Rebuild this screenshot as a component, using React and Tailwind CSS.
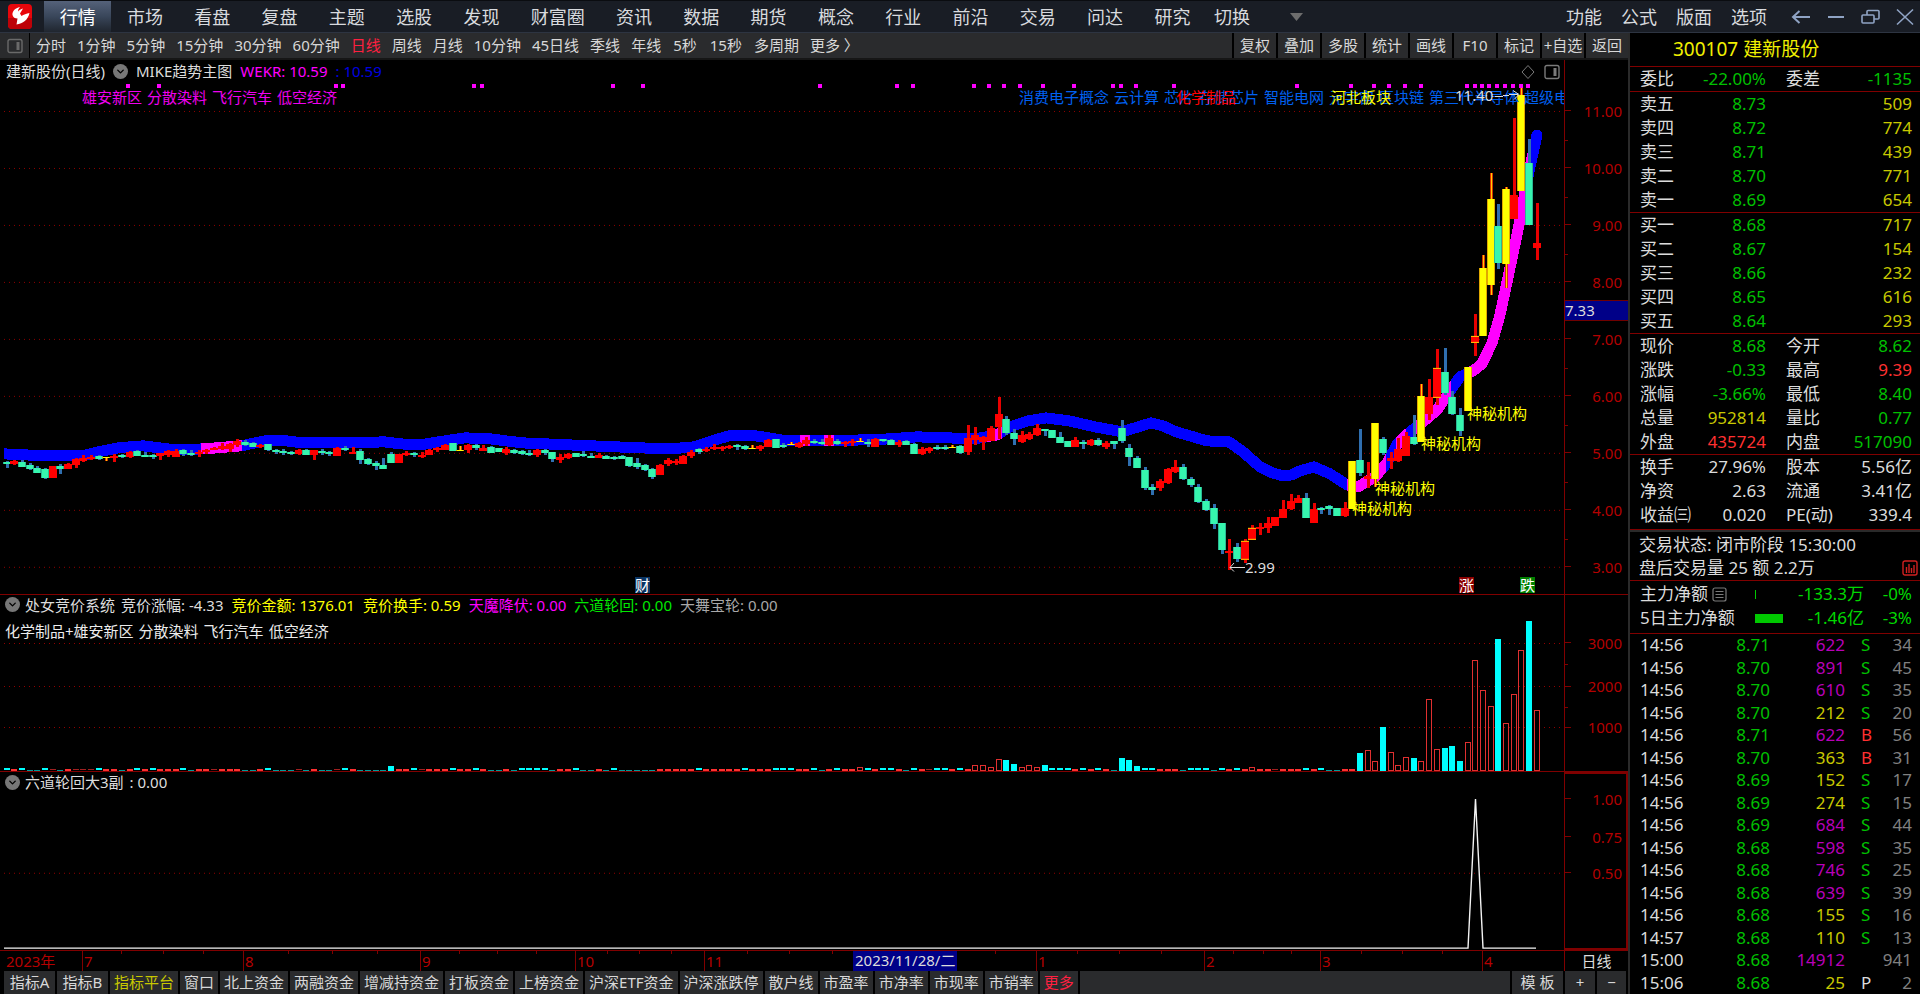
import clsx from 'clsx'
import { ChevronDown } from 'lucide-react'

const MENU = ['行情', '市场', '看盘', '复盘', '主题', '选股', '发现', '财富圈', '资讯', '数据', '期货', '概念', '行业', '前沿', '交易', '问达', '研究']
const PERIODS = ['分时', '1分钟', '5分钟', '15分钟', '30分钟', '60分钟', '日线', '周线', '月线', '10分钟', '45日线', '季线', '年线', '5秒', '15秒', '多周期', '更多 〉']
const TOOLS = ['复权', '叠加', '多股', '统计', '画线', 'F10', '标记', '+自选', '返回']
const TABS = ['指标A', '指标B', '指标平台', '窗口', '北上资金', '两融资金', '增减持资金', '打板资金', '上榜资金', '沪深ETF资金', '沪深涨跌停', '散户线', '市盈率', '市净率', '市现率', '市销率', '更多']

const HOT = ['雄安新区', '分散染料', '飞行汽车', '低空经济']
const CONCEPTS = ['消费电子概念', '云计算', '芯片', '存储芯片', '智能电网', '元宇宙', '区块链', '第三代半导体', '超级电容']

// plot width and panel heights in chart units
const W = 1564
const MAIN_H = 534
const VOL_H = 176
const SUB_H = 178
const HEAD = 12 // header space above the price scale

const xOf = (i) => Math.round(6.5 + 7.69 * i)

// [kind, high, bodyTop, bodyBottom, low]
// g = down, r = up, y = limit-up, c = up with yellow caps
const CANDLES = [
  ['g', 389, 390, 392, 396], ['r', 388, 389, 392, 393], ['g', 388, 390, 395, 395], ['g', 391, 393, 397, 398], ['g', 394, 396, 401, 401],
  ['g', 396, 397, 406, 407], ['r', 394, 394, 406, 406], ['g', 392, 394, 397, 402], ['r', 391, 392, 397, 397], ['r', 386, 387, 393, 396],
  ['r', 383, 386, 389, 390], ['r', 383, 385, 387, 388], ['g', 383, 384, 387, 388], ['y', 385, 385, 386, 389], ['r', 382, 384, 386, 390],
  ['g', 382, 383, 384, 386], ['r', 379, 380, 385, 386], ['g', 378, 379, 384, 384], ['g', 380, 383, 384, 385], ['g', 382, 383, 385, 387],
  ['r', 381, 381, 384, 388], ['r', 378, 379, 383, 385], ['r', 377, 379, 385, 385], ['g', 377, 378, 382, 384], ['g', 378, 381, 382, 384],
  ['r', 378, 380, 382, 385], ['r', 377, 378, 380, 382], ['r', 375, 376, 378, 378], ['r', 371, 374, 377, 378], ['r', 371, 372, 377, 380],
  ['r', 367, 369, 373, 375], ['g', 368, 370, 373, 374], ['g', 370, 371, 375, 375], ['r', 372, 373, 375, 376], ['g', 372, 372, 378, 379],
  ['g', 377, 378, 380, 382], ['g', 377, 379, 380, 383], ['g', 379, 380, 382, 383], ['r', 377, 378, 382, 383], ['g', 377, 378, 383, 383],
  ['r', 378, 378, 383, 388], ['g', 377, 379, 381, 383], ['g', 379, 380, 382, 384], ['r', 375, 376, 384, 384], ['g', 374, 376, 378, 379],
  ['r', 375, 380, 382, 382], ['g', 377, 379, 388, 392], ['g', 386, 387, 392, 393], ['g', 389, 391, 394, 398], ['g', 386, 393, 397, 397],
  ['g', 380, 382, 391, 391], ['r', 382, 382, 391, 391], ['r', 379, 381, 382, 384], ['g', 380, 381, 383, 385], ['r', 380, 383, 385, 386],
  ['r', 377, 378, 383, 383], ['r', 375, 376, 378, 380], ['r', 372, 373, 378, 378], ['g', 371, 371, 379, 379], ['y', 374, 378, 378, 378],
  ['r', 372, 373, 378, 381], ['g', 372, 373, 376, 378], ['r', 373, 376, 379, 379], ['g', 374, 375, 381, 381], ['g', 376, 376, 380, 380],
  ['r', 375, 377, 381, 383], ['g', 377, 378, 381, 382], ['g', 378, 379, 382, 383], ['g', 378, 381, 383, 384], ['r', 377, 378, 383, 385],
  ['g', 377, 378, 381, 383], ['g', 380, 380, 387, 390], ['r', 382, 385, 388, 391], ['r', 381, 382, 386, 387], ['g', 381, 381, 385, 385],
  ['g', 379, 382, 384, 385], ['g', 381, 384, 386, 386], ['r', 381, 383, 386, 386], ['g', 383, 384, 387, 387], ['g', 384, 385, 387, 388],
  ['g', 383, 384, 387, 387], ['g', 385, 385, 394, 395], ['g', 386, 391, 395, 397], ['g', 392, 393, 398, 399], ['g', 396, 397, 405, 407],
  ['r', 392, 393, 403, 403], ['r', 386, 388, 392, 394], ['r', 387, 389, 390, 393], ['r', 383, 384, 392, 392], ['r', 378, 380, 384, 386],
  ['g', 376, 377, 380, 382], ['r', 375, 377, 379, 380], ['r', 372, 375, 377, 378], ['r', 374, 375, 377, 379], ['r', 373, 374, 376, 377],
  ['g', 372, 373, 375, 378], ['g', 373, 374, 377, 378], ['y', 373, 376, 376, 376], ['r', 373, 374, 377, 379], ['r', 367, 368, 375, 375],
  ['g', 367, 367, 376, 376], ['g', 371, 373, 375, 376], ['y', 370, 372, 372, 373], ['r', 370, 371, 375, 376], ['r', 365, 368, 372, 374],
  ['g', 367, 369, 371, 372], ['g', 367, 370, 372, 373], ['r', 363, 366, 373, 374], ['g', 367, 369, 372, 373], ['r', 369, 370, 372, 375],
  ['r', 367, 369, 371, 374], ['y', 366, 369, 369, 369], ['g', 367, 370, 372, 375], ['r', 366, 367, 375, 375], ['g', 367, 367, 369, 370],
  ['g', 367, 368, 373, 373], ['r', 368, 370, 373, 375], ['g', 368, 369, 373, 373], ['g', 371, 372, 382, 382], ['r', 375, 377, 382, 383],
  ['r', 375, 376, 379, 381], ['g', 373, 375, 377, 378], ['g', 373, 375, 376, 378], ['y', 373, 375, 375, 376], ['g', 373, 374, 381, 382],
  ['r', 353, 366, 380, 383], ['r', 355, 363, 368, 373], ['r', 364, 365, 370, 378], ['r', 354, 356, 369, 369], ['r', 325, 342, 355, 367],
  ['g', 344, 347, 361, 363], ['g', 357, 361, 367, 373], ['r', 359, 363, 370, 371], ['r', 360, 362, 367, 368], ['r', 352, 356, 363, 364],
  ['g', 357, 357, 359, 364], ['g', 358, 358, 366, 366], ['g', 360, 365, 371, 371], ['g', 369, 369, 375, 375], ['r', 365, 368, 375, 375],
  ['g', 368, 370, 372, 377], ['r', 367, 368, 373, 374], ['g', 366, 368, 373, 374], ['r', 369, 371, 375, 377], ['g', 369, 369, 372, 377],
  ['g', 348, 356, 369, 371], ['g', 372, 376, 385, 394], ['g', 384, 386, 396, 396], ['g', 395, 398, 416, 418], ['g', 412, 415, 418, 423],
  ['r', 407, 409, 416, 419], ['r', 396, 397, 411, 412], ['r', 388, 395, 400, 401], ['g', 392, 395, 407, 408], ['g', 405, 407, 413, 415],
  ['g', 412, 415, 430, 431], ['g', 427, 429, 438, 439], ['g', 432, 436, 452, 457], ['g', 451, 451, 478, 482], ['r', 467, 479, 480, 498],
  ['g', 471, 475, 487, 490], ['c', 467, 469, 488, 491], ['c', 453, 456, 468, 468], ['r', 451, 455, 457, 463], ['r', 445, 451, 456, 461],
  ['r', 445, 445, 454, 454], ['r', 428, 437, 446, 446], ['r', 422, 429, 437, 438], ['r', 423, 426, 431, 431], ['g', 421, 426, 446, 446],
  ['r', 431, 437, 451, 451], ['g', 435, 436, 437, 442], ['g', 433, 434, 437, 443], ['g', 436, 436, 444, 444], ['r', 430, 436, 444, 445],
  ['y', 389, 389, 437, 437], ['g', 357, 388, 401, 404], ['r', 390, 404, 407, 416], ['y', 351, 351, 407, 415], ['g', 365, 367, 381, 383],
  ['r', 380, 386, 389, 397], ['r', 366, 377, 389, 390], ['r', 360, 364, 384, 384], ['g', 343, 365, 372, 373], ['y', 312, 324, 370, 370],
  ['r', 307, 325, 342, 348], ['c', 277, 296, 326, 333], ['g', 276, 300, 321, 323], ['g', 319, 325, 342, 343], ['g', 336, 343, 359, 364],
  ['y', 295, 295, 339, 339], ['c', 242, 264, 271, 284], ['y', 183, 196, 264, 264], ['y', 101, 127, 213, 223], ['g', 132, 154, 191, 197],
  ['y', 115, 117, 192, 216], ['r', 46, 123, 147, 147], ['y', 16, 23, 119, 119], ['g', 67, 91, 153, 153], ['r', 131, 171, 176, 188],
]

const BAND = '4,382 45,384 82,384 94,381 118,376 143,374 167,377 180,378 204,377 241,374 265,369 286,369 302,371 351,371 384,370 400,372 420,373 445,369 465,366 490,367 522,371 592,374 640,376 671,377 694,375 712,369 729,364 756,364 787,369 828,369 863,368 890,367 917,365 948,366 975,367 997,363 1010,355 1028,349 1046,346 1069,349 1095,355 1122,360 1135,356 1151,351 1163,354 1176,360 1207,369 1229,370 1243,380 1260,395 1272,401 1283,404 1292,403 1300,399 1314,395 1330,402 1347,413 1358,415 1375,405 1387,391 1398,371 1410,360 1423,350 1437,338 1450,319 1460,305 1473,299 1482,292 1492,271 1500,243 1510,196 1518,158 1525,120 1530,95 1537,63'
const PINK = [[201, 242], [800, 810], [824, 834], [974, 977], [987, 1002], [1347, 1386], [1396, 1406], [1416, 1451], [1466, 1531]]

const DOTS = [128, 159, 336, 343, 474, 482, 613, 643, 820, 897, 913, 974, 989, 1004, 1020, 1043, 1074, 1113, 1121, 1136, 1174, 1297, 1351, 1374, 1389, 1405, 1421, 1467, 1475, 1482, 1489, 1497, 1505, 1513, 1521, 1528]

// quiet days, one letter each: c/d = down, r/m = up (d and m are the faint ones)
const QUIET = [
  'crcddcmdrm', 'mmcrrdrcrc', 'rrrcdrrmrr', 'rddrcdddmd', 'rddmcrdddd', 'crrcmrrrcr',
  'rcrddrdccc', 'cdrrcddrdc', 'dddddrrrrr', 'crrrrrcrrr', 'cccrrcdrcr', 'rrcrccrdcr',
  'mccrcrrrrr', 'ccrrrccccr', 'crcrdccccc', 'rrrdcccdcr', 'crrrrmrrrc', 'rcddrr',
].join('')
const QUIET_H = { c: 3, r: 2, d: 1, m: 2 }
const QUIET_FILL = { c: '#00ffff', r: '#ff3030', d: '#009c9c', m: '#a02020' }

// [candle index, 'c' | 'r', height]
const BARS = [
  [50, 'c', 5], [111, 'r', 4], [126, 'r', 6], [127, 'r', 6], [128, 'r', 4], [129, 'r', 12], [130, 'c', 11], [131, 'c', 7], [132, 'r', 4], [133, 'r', 6], [134, 'r', 4], [135, 'c', 6],
  [145, 'c', 13], [146, 'c', 11], [147, 'c', 5], [162, 'r', 4],
  [176, 'c', 18], [177, 'r', 21], [178, 'r', 10], [179, 'c', 43], [180, 'r', 19], [181, 'r', 6], [182, 'r', 14], [183, 'c', 13],
  [184, 'r', 10], [185, 'r', 71], [186, 'r', 22], [187, 'c', 23], [188, 'c', 25], [189, 'c', 10], [190, 'r', 29], [191, 'r', 110],
  [192, 'r', 80], [193, 'r', 64], [194, 'c', 131], [195, 'r', 47], [196, 'r', 76], [197, 'r', 120], [198, 'c', 149], [199, 'r', 60],
]
const tall = new Set(BARS.map((b) => b[0]))

const MONTHS = [[82, '7'], [243, '8'], [420, '9'], [575, '10'], [704, '11'], [1036, '1'], [1204, '2'], [1320, '3'], [1482, '4']]
const WEEKS = [121, 163, 203, 288, 332, 377, 459, 497, 536, 607, 639, 671, 747, 789, 832, 995, 1077, 1119, 1161, 1233, 1263, 1291, 1361, 1402, 1442]

const QUOTES = [
  [['委比', '-22.00%', 'g', '委差', '-1135', 'g']],
  [['卖五', '8.73', 'g', '', '509', 'y'], ['卖四', '8.72', 'g', '', '774', 'y'], ['卖三', '8.71', 'g', '', '439', 'y'], ['卖二', '8.70', 'g', '', '771', 'y'], ['卖一', '8.69', 'g', '', '654', 'y']],
  [['买一', '8.68', 'g', '', '717', 'y'], ['买二', '8.67', 'g', '', '154', 'y'], ['买三', '8.66', 'g', '', '232', 'y'], ['买四', '8.65', 'g', '', '616', 'y'], ['买五', '8.64', 'g', '', '293', 'y']],
  [['现价', '8.68', 'g', '今开', '8.62', 'g'], ['涨跌', '-0.33', 'g', '最高', '9.39', 'r'], ['涨幅', '-3.66%', 'g', '最低', '8.40', 'g'], ['总量', '952814', 'y', '量比', '0.77', 'g'], ['外盘', '435724', 'r', '内盘', '517090', 'g']],
  [['换手', '27.96%', 'w', '股本', '5.56亿', 'w'], ['净资', '2.63', 'w', '流通', '3.41亿', 'w'], ['收益㈢', '0.020', 'w', 'PE(动)', '339.4', 'w']],
]

const TICKS = [
  ['14:56', '8.71', '622', 'S', '34'], ['14:56', '8.70', '891', 'S', '45'], ['14:56', '8.70', '610', 'S', '35'], ['14:56', '8.70', '212', 'S', '20'],
  ['14:56', '8.71', '622', 'B', '56'], ['14:56', '8.70', '363', 'B', '31'], ['14:56', '8.69', '152', 'S', '17'], ['14:56', '8.69', '274', 'S', '15'],
  ['14:56', '8.69', '684', 'S', '44'], ['14:56', '8.68', '598', 'S', '35'], ['14:56', '8.68', '746', 'S', '25'], ['14:56', '8.68', '639', 'S', '39'],
  ['14:56', '8.68', '155', 'S', '16'], ['14:57', '8.68', '110', 'S', '13'], ['15:00', '8.68', '14912', '', '941'], ['15:06', '8.68', '25', 'P', '2'],
]

const TONE = { g: 'text-[#00c000]', r: 'text-[#ff3030]', y: 'text-[#c8c800]', w: 'text-[#dcdcdc]' }

// label pinned to a point of a panel
function Pin({ x, y, h, className, children }) {
  return (
    <span
      className={clsx('absolute -translate-y-1/2 whitespace-nowrap leading-4', className)}
      style={{ left: `${(x / W) * 100}%`, top: `${(y / h) * 100}%` }}
    >
      {children}
    </span>
  )
}

function Grid({ lines }) {
  return lines.map((y) => (
    <line key={y} x1="4" x2={W} y1={y + 0.5} y2={y + 0.5} stroke="#900000" strokeDasharray="1 4" />
  ))
}

function Scale({ h, labels, minor = [], boxed, children }) {
  return (
    <div className={clsx('relative w-16 shrink-0 border-l border-[#800000]', boxed && 'border-2 border-[#800000]')}>
      {labels.map(([y, text]) => (
        <div key={text} className={clsx('absolute inset-x-0 flex -translate-y-1/2 items-center justify-between leading-4 text-[#b40000]', boxed ? 'pr-1' : 'pr-[6px]')} style={{ top: `${(y / h) * 100}%` }}>
          <i className="h-px w-[6px] bg-[#800000]" />
          {text}
        </div>
      ))}
      {minor.map((y) => (
        <i key={y} className="absolute left-0 h-px w-[3px] bg-[#800000]" style={{ top: `${(y / h) * 100}%` }} />
      ))}
      {children}
    </div>
  )
}

function Candle({ x, data: [kind, high, top, bottom, low] }) {
  const h = Math.max(bottom - top, kind === 'y' ? 1 : 2)
  const l = x - 4
  if (kind === 'g') {
    return (
      <g>
        <rect x={x - 1} y={high} width="3" height={low - high} fill="#2f6fb0" />
        <rect x={l} y={top} width="8" height={h} fill="#2bb894" />
        <rect x={l + 1} y={top} width="6" height={h} fill="#36f5ae" />
      </g>
    )
  }
  if (kind === 'y') {
    return (
      <g>
        <rect x={x - 1} y={high} width="3" height={low - high} fill="#d83000" />
        <rect x={x} y={high} width="1" height={low - high} fill="#ffd000" />
        <rect x={l} y={top} width="8" height={h} fill="#e0a800" />
        <rect x={l + 1} y={top} width="6" height={h} fill="#ffff00" />
      </g>
    )
  }
  return (
    <g>
      <rect x={x - 1} y={high} width="3" height={low - high} fill="#e80000" />
      <rect x={l} y={top} width="8" height={h} fill="#ff0000" />
      {kind === 'c' && <path d={`M${l} ${top + 0.5}h8M${l} ${bottom - 0.5}h8`} stroke="#ffd000" />}
    </g>
  )
}

function Fold() {
  return (
    <button className="flex size-[15px] shrink-0 items-center justify-center rounded-full bg-[#777777] text-black" aria-label="指标菜单">
      <ChevronDown size={11} strokeWidth={3} />
    </button>
  )
}

function PaneIcon() {
  return (
    <svg width="16" height="16" viewBox="0 0 16 16" fill="none" stroke="currentColor" strokeWidth="1.4">
      <rect x="1" y="1.5" width="14" height="13" rx="2" />
      <rect x="9.5" y="4" width="3" height="8" fill="currentColor" stroke="none" />
    </svg>
  )
}

function TopBar() {
  return (
    <header className="flex h-[33px] shrink-0 items-center overflow-hidden border-t border-b border-t-[#0a0c10] border-b-[#2d3441] bg-[#191d25] text-lg text-[#d8dade]">
      <svg className="mx-2 shrink-0" width="24" height="25" viewBox="0 0 24 25">
        <rect width="24" height="25" rx="4" fill="#e8060b" />
        <path d="M0 14h24v7a4 4 0 0 1-4 4H4a4 4 0 0 1-4-4z" fill="#bd0208" />
        <path d="M12 3C7 4 4 7.500 4.500 11C5 13.500 7 14.500 9.500 14.500L8.500 20.500C15 19.500 20 16 21.500 9C18.500 9.500 15.500 10.500 13.500 12L12 9.500L15 4.500C13 5 11 6 10 7.500C10 6 10.500 4.500 12 3Z" fill="#fff" />
      </svg>
      <nav className="ml-1 flex h-full w-[1162px]">
        {MENU.map((m, i) => (
          <button key={m} className={clsx('grow whitespace-nowrap', i === 0 && 'bg-linear-to-b from-[#55627a] via-[#39465a] to-[#20262f] text-white')}>
            {m}
          </button>
        ))}
      </nav>
      <button className="ml-2 whitespace-nowrap">切换</button>
      <svg className="ml-10 shrink-0" width="13" height="8" viewBox="0 0 13 8"><path d="M0 0h13L6.500 8z" fill="#6d6d6d" /></svg>
      <div className="ml-auto flex items-center gap-[19px] pr-[6px] whitespace-nowrap">
        <button>功能</button>
        <button>公式</button>
        <button>版面</button>
        <button>选项</button>
        <div className="ml-[5px] flex items-center gap-4 text-[#8fa3c4]">
          <button aria-label="返回">
            <svg width="20" height="20" viewBox="0 0 20 20" fill="none" stroke="currentColor" strokeWidth="2"><path d="M19 10H2M8.500 4l-6.500 6l6.500 6" /></svg>
          </button>
          <button aria-label="最小化">
            <svg width="18" height="20" viewBox="0 0 18 20" fill="none" stroke="currentColor" strokeWidth="2"><path d="M1 10h16" /></svg>
          </button>
          <button aria-label="还原">
            <svg width="19" height="20" viewBox="0 0 19 20" fill="none" stroke="currentColor" strokeWidth="1.6">
              <rect x="1" y="8" width="12" height="8" rx="1" />
              <path d="M6 8V4.500a1 1 0 0 1 1-1h10a1 1 0 0 1 1 1V11a1 1 0 0 1-1 1h-4" />
            </svg>
          </button>
          <button aria-label="关闭">
            <svg width="18" height="20" viewBox="0 0 18 20" fill="none" stroke="currentColor" strokeWidth="1.6"><path d="M1 2.500l16 15M17 2.500l-16 15" /></svg>
          </button>
        </div>
      </div>
    </header>
  )
}

function PeriodBar() {
  return (
    <div className="flex h-[27px] shrink-0 border-b-2 border-[#161616] bg-[#2a2b2d] text-[#d8d8d8]">
      <button className="flex w-[30px] shrink-0 items-center border-r border-black pl-[7px] text-[#6a6a6a]" aria-label="侧栏">
        <PaneIcon />
      </button>
      <div className="flex min-w-0 flex-1 items-center gap-[11px] overflow-hidden pl-[6px] whitespace-nowrap">
        {PERIODS.map((p) => (
          <button key={p} className={clsx(p === '日线' && 'text-[#ff2040]', p.endsWith('秒') && 'px-px')}>{p}</button>
        ))}
      </div>
      <div className="flex shrink-0 gap-[2px] bg-black pl-[2px]">
        {TOOLS.map((t) => (
          <button key={t} className="w-[42px] bg-[#2a2b2d] whitespace-nowrap">{t}</button>
        ))}
      </div>
    </div>
  )
}

function MainPanel() {
  const prices = [11, 10, 9, 8, 7, 6, 5, 4, 3]
  const yOf = (p) => Math.round(39 + (11 - p) * 57)
  const pin = { h: MAIN_H }
  return (
    <section className="flex min-h-0 flex-[535_1_0%] border-b border-[#800000]">
      <div className="relative min-w-0 flex-1 overflow-hidden">
        <svg className="absolute inset-0 size-full" viewBox={`0 0 ${W} ${MAIN_H}`} preserveAspectRatio="none" shapeRendering="crispEdges">
          <defs>
            <clipPath id="pink">
              {PINK.map(([a, b]) => <rect key={a} x={a} y="0" width={b - a} height={MAIN_H} />)}
            </clipPath>
          </defs>
          <g transform={`translate(0 ${HEAD})`}>
            <Grid lines={prices.map(yOf)} />
            <polyline points={BAND} fill="none" stroke="#0000ff" strokeWidth="11" strokeLinejoin="round" />
            <circle cx="1537" cy="63" r="5.5" fill="#0000ff" />
            <g clipPath="url(#pink)">
              <polyline points={BAND} fill="none" stroke="#ff00ff" strokeWidth="11" strokeLinejoin="round" />
            </g>
            {CANDLES.map((c, i) => <Candle key={i} x={xOf(i)} data={c} />)}
            {DOTS.map((x) => <rect key={x} x={x - 2} y="12" width="4" height="4" fill="#ff00ff" />)}
          </g>
        </svg>

        <div className="absolute top-px left-[6px] flex items-center gap-2 leading-5 whitespace-nowrap text-[#dcdcdc]">
          <span>建新股份(日线)</span>
          <Fold />
          <span>MIKE趋势主图</span>
          <span className="text-[#ff00ff]">WEKR: 10.59</span>
          <span className="text-[#0000e0]">: 10.59</span>
        </div>
        <div className="absolute top-1 right-1 flex items-center gap-2 text-[#7a7a7a]">
          <svg width="16" height="16" viewBox="0 0 16 16" fill="none" stroke="currentColor"><path d="M8 1.500L14 8L8 14.500L2 8z" /></svg>
          <PaneIcon />
        </div>

        <Pin {...pin} x={82} y={37} className="flex gap-[5px] text-[#f000f0]">
          {HOT.map((t) => <span key={t}>{t}</span>)}
        </Pin>
        <Pin {...pin} x={1019} y={37} className="flex gap-[5px] text-[#0060f0]">
          {CONCEPTS.map((t) => <span key={t}>{t}</span>)}
        </Pin>
        <Pin {...pin} x={1176} y={37} className="text-[#ff0000]">化学制品</Pin>
        <Pin {...pin} x={1331} y={37} className="text-[#ffff00]">河北板块</Pin>
        <Pin {...pin} x={1455} y={35} className="flex items-center text-[#dcdcdc]">
          11.40
          <svg width="28" height="12" viewBox="0 0 28 12" fill="none" stroke="currentColor"><path d="M2 7.500h8M10 6.500h6M16 5.500h9M20 1.500l6 4l-5 5" /></svg>
        </Pin>
        <Pin {...pin} x={1229} y={507} className="flex items-center text-[#dcdcdc]">
          <svg width="16" height="10" viewBox="0 0 16 10" fill="none" stroke="currentColor"><path d="M1 5.500h15M5 1l-4 4.500l4 4" /></svg>
          2.99
        </Pin>
        <Pin {...pin} x={1352} y={448} className="text-[#ffff00]">神秘机构</Pin>
        <Pin {...pin} x={1375} y={428} className="text-[#ffff00]">神秘机构</Pin>
        <Pin {...pin} x={1421} y={383} className="text-[#ffff00]">神秘机构</Pin>
        <Pin {...pin} x={1467} y={353} className="text-[#ffff00]">神秘机构</Pin>
        <Pin {...pin} x={635} y={525} className="bg-[#0b3564] text-white">财</Pin>
        <Pin {...pin} x={1459} y={525} className="bg-[#8b0000] text-white">涨</Pin>
        <Pin {...pin} x={1520} y={525} className="bg-[#008000] text-white">跌</Pin>
      </div>
      <Scale h={MAIN_H} labels={prices.map((p) => [yOf(p) + HEAD, p.toFixed(2)])} minor={prices.slice(0, -1).map((p) => yOf(p - 0.5) + HEAD)}>
        <span className="absolute inset-x-0 top-[45%] h-[21px] border-y border-[#700000] bg-[#000088] leading-[18px] text-[#dcdcdc]">7.33</span>
      </Scale>
    </section>
  )
}

function VolumePanel() {
  const base = VOL_H - 1
  return (
    <section className="flex min-h-0 flex-[177_1_0%] border-b border-[#800000]">
      <div className="relative min-w-0 flex-1 overflow-hidden">
        <svg className="absolute inset-0 size-full" viewBox={`0 0 ${W} ${VOL_H}`} preserveAspectRatio="none" shapeRendering="crispEdges">
          <Grid lines={[48, 91, 132]} />
          {QUIET.split('').map((k, i) => !tall.has(i) && (
            <rect
              key={i}
              x={xOf(i) - 3}
              y={base - QUIET_H[k]}
              width="6"
              height={k === 'c' || k === 'r' ? 2 : 1}
              fill={QUIET_FILL[k]}
            />
          ))}
          {BARS.map(([i, k, h]) => k === 'c'
            ? <rect key={i} x={xOf(i) - 3} y={base - h} width="6" height={h} fill="#00ffff" />
            : <rect key={i} x={xOf(i) - 2.5} y={base - h + 0.5} width="5" height={h - 1} fill="none" stroke="#e03030" />)}
        </svg>
        <div className="absolute top-0 left-[5px] flex items-center gap-2 leading-5 whitespace-nowrap text-[#dcdcdc]">
          <Fold />
          <span className="-ml-[3px]">处女竞价系统</span>
          <span className="-ml-[2px]">竞价涨幅: -4.33</span>
          <span className="text-[#ffff00]">竞价金额: 1376.01</span>
          <span className="text-[#ffff00]">竞价换手: 0.59</span>
          <span className="text-[#ff00ff]">天魔降伏: 0.00</span>
          <span className="text-[#00e800]">六道轮回: 0.00</span>
          <span className="text-[#a8a8a8]">天舞宝轮: 0.00</span>
        </div>
        <div className="absolute top-[26px] left-[5px] flex gap-[5px] leading-5 whitespace-nowrap text-[#ececec]">
          <span>化学制品+雄安新区</span>
          {HOT.slice(1).map((t) => <span key={t}>{t}</span>)}
        </div>
      </div>
      <Scale h={VOL_H} labels={[[48, '3000'], [91, '2000'], [132, '1000']]} minor={[69, 112]} />
    </section>
  )
}

function SignalPanel() {
  return (
    <section className="flex min-h-0 flex-[178_1_0%] border-b border-[#800000]">
      <div className="relative min-w-0 flex-1 overflow-hidden">
        <svg className="absolute inset-0 size-full" viewBox={`0 0 ${W} ${SUB_H}`} preserveAspectRatio="none">
          <Grid lines={[101]} />
          <path d="M4 176.500H1468L1475.500 27L1483 176.500H1536" fill="none" stroke="#f4f4f4" strokeWidth="1.4" />
        </svg>
        <div className="absolute top-0 left-[5px] flex items-center gap-[5px] leading-5 whitespace-nowrap text-[#dcdcdc]">
          <Fold />
          <span>六道轮回大3副</span>
          <span className="ml-px">: 0.00</span>
        </div>
      </div>
      <Scale h={SUB_H} boxed labels={[[25, '1.00'], [64, '0.75'], [101, '0.50']]} />
    </section>
  )
}

function DateAxis() {
  return (
    <div className="flex h-5 shrink-0">
      <div className="relative min-w-0 flex-1 overflow-hidden text-[#b40000]">
        <span className="absolute left-[6px] leading-5">2023年</span>
        {WEEKS.map((x) => <i key={x} className="absolute top-0 h-[3px] w-px bg-[#800000]" style={{ left: `${(x / W) * 100}%` }} />)}
        {MONTHS.map(([x, m]) => (
          <span key={x} className="absolute top-0 h-full border-l border-[#800000] pl-px leading-5" style={{ left: `${(x / W) * 100}%` }}>{m}</span>
        ))}
        <span className="absolute top-0 h-full bg-[#000088] px-[2px] leading-[18px] text-[#dcdcdc]" style={{ left: `${(853 / W) * 100}%` }}>2023/11/28/二</span>
      </div>
      <button className="w-16 shrink-0 border-l border-[#800000] leading-5 text-[#dcdcdc]">日线</button>
    </div>
  )
}

function BottomTabs() {
  return (
    <footer className="flex h-[23px] shrink-0 gap-[2px] overflow-hidden pl-1 whitespace-nowrap text-[#d8d8d8]">
      {TABS.map((t) => (
        <button key={t} className={clsx('min-w-[38px] bg-[#2a2b2d] px-1', t.length === 3 && 'min-w-[51px]', t === '指标平台' && 'text-[#c8c800]', t === '更多' && 'text-[#ff2040]')}>{t}</button>
      ))}
      <div className="flex-1 bg-[#2a2b2d]" />
      <button className="w-[51px] bg-[#2a2b2d]">模 板</button>
      <button className="w-[30px] bg-[#2a2b2d]">+</button>
      <button className="mr-[2px] w-[29px] bg-[#2a2b2d]">−</button>
    </footer>
  )
}

function QuotePanel() {
  return (
    <aside className="flex w-[292px] shrink-0 flex-col overflow-hidden border-l-2 border-[#2a2a2a] text-[17px] whitespace-nowrap text-[#dcdcdc]">
      <h1 className="h-[33px] shrink-0 pl-[43px] text-[19px] leading-8 text-[#f0f000]">300107 建新股份</h1>
      {QUOTES.map((rows, s) => (
        <dl key={s} className={clsx('shrink-0 border-t border-[#800000] pr-2 pl-[10px]', s === 4 && 'border-b pb-[2px]')}>
          {rows.map(([a, av, at, b, bv, bt]) => (
            <div key={a} className="grid h-6 grid-cols-2 gap-5 leading-6">
              <div className="flex justify-between"><dt>{a}</dt><dd className={TONE[at]}>{av}</dd></div>
              <div className="flex justify-between"><dt>{b}</dt><dd className={TONE[bt]}>{bv}</dd></div>
            </div>
          ))}
        </dl>
      ))}
      <div className="shrink-0 border-t-2 border-[#2a2a2a] pt-px pr-[2px] pb-px pl-[9px] leading-[23px]">
        <p>交易状态: 闭市阶段 15:30:00</p>
        <div className="flex items-center justify-between">
          <p>盘后交易量 25 额 2.2万</p>
          <svg width="16" height="16" viewBox="0 0 16 16" fill="none" stroke="#d02020" strokeWidth="1.4">
            <rect x="1" y="1" width="14" height="14" rx="2" />
            <path d="M4.500 7v6M7 4v9M9.500 8v5M12 5v8" />
          </svg>
        </div>
      </div>
      <div className="shrink-0 border-y border-[#800000] pt-px pr-2 pb-[3px] pl-[10px] leading-6">
        <div className="flex items-center">
          <span className="flex w-[115px] items-center gap-1">
            主力净额
            <svg width="15" height="15" viewBox="0 0 15 15" fill="none" stroke="#7a7a7a" strokeWidth="1.2"><rect x="1" y="1" width="13" height="13" rx="2" /><path d="M3.500 4.500h8M3.500 7.500h8M3.500 10.500h8" /></svg>
          </span>
          <i className="h-[9px] w-px bg-[#00c800]" />
          <span className="flex-1 text-right text-[#00d800]">-133.3万</span>
          <span className="w-12 text-right text-[#00d800]">-0%</span>
        </div>
        <div className="flex items-center">
          <span className="w-[115px]">5日主力净额</span>
          <i className="h-[9px] w-7 bg-[#00c800]" />
          <span className="flex-1 text-right text-[#00d800]">-1.46亿</span>
          <span className="w-12 text-right text-[#00d800]">-3%</span>
        </div>
      </div>
      <div className="flex min-h-0 flex-1 pr-2 pl-[10px]">
        <table className="h-full w-full table-fixed border-collapse leading-[22px]">
          <colgroup>
            <col className="w-[60px]" />
            <col className="w-[70px]" />
            <col className="w-[75px]" />
            <col className="w-[35px]" />
            <col className="w-8" />
          </colgroup>
          <tbody>
            {TICKS.map(([t, p, v, f, n], i) => (
              <tr key={i}>
                <td>{t}</td>
                <td className="text-right text-[#00c000]">{p}</td>
                <td className={clsx('text-right', Number(v) > 500 ? 'text-[#b800b8]' : 'text-[#c8c800]')}>{v}</td>
                <td className={clsx('pl-4', f === 'S' && 'text-[#00c000]', f === 'B' && 'text-[#ff3030]')}>{f}</td>
                <td className="text-right text-[#808080]">{n}</td>
              </tr>
            ))}
          </tbody>
        </table>
      </div>
    </aside>
  )
}

export default function App() {
  return (
    <div className="flex h-screen flex-col overflow-hidden bg-black font-['Noto_Sans','Noto_Sans_CJK_SC',sans-serif] text-[15px]">
      <TopBar />
      <div className="flex min-h-0 flex-1">
        <main className="flex min-w-0 flex-1 flex-col">
          <PeriodBar />
          <MainPanel />
          <VolumePanel />
          <SignalPanel />
          <DateAxis />
          <BottomTabs />
        </main>
        <QuotePanel />
      </div>
    </div>
  )
}
